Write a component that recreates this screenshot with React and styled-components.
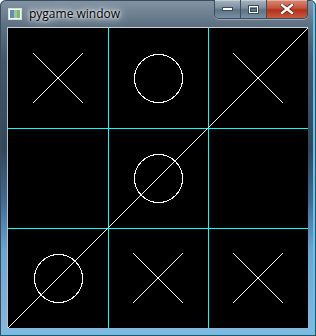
import React from "react"
import styled, { createGlobalStyle } from "styled-components"

const GlobalStyle = createGlobalStyle`
  html, body {
    margin: 0;
    padding: 0;
    background: #ffffff;
  }
`

const Window = styled.div`
  width: 316px;
  height: 336px;
  box-sizing: border-box;
  padding: 0 8px 8px 8px;
  display: flex;
  flex-direction: column;
  border-radius: 6px 6px 0 0;
  background: linear-gradient(
    to bottom,
    #8394a3 0px,
    #5f7284 24px,
    #435669 60px,
    #33475b 150px,
    #3f6a92 200px,
    #6ea4d2 250px,
    #86b9df 336px
  );
  box-shadow: inset 0 0 0 1px #3a4d60, inset -1px -1px 0 2px #5cc6ee;
  font-family: "Open Sans", "Liberation Sans", sans-serif;
`

const TitleBar = styled.div`
  height: 27px;
  display: flex;
  align-items: flex-start;
`

const AppIcon = styled.div`
  width: 14px;
  height: 12px;
  margin-top: 8px;
  display: flex;
`

const Title = styled.div`
  margin-left: 7px;
  margin-top: 6px;
  font-size: 12px;
  line-height: 15px;
  color: #000000;
  text-shadow: 0 0 6px #ffffff, 0 0 12px #e8eef3, 0 0 3px #ffffff;
`

const Buttons = styled.div`
  margin-left: auto;
  display: flex;
  height: 18px;
  border: 1px solid #3c4c5c;
  border-top: none;
  border-radius: 0 0 5px 5px;
  overflow: hidden;
  box-shadow: 0 1px 0 rgba(255, 255, 255, 0.35);
`

const CapButton = styled.div`
  width: ${(p) => p.$w}px;
  height: 100%;
  display: flex;
  align-items: center;
  justify-content: center;
  box-sizing: border-box;
  border-left: ${(p) => (p.$first ? "none" : "1px solid #3f4f5e")};
  background: ${(p) =>
    p.$close
      ? "linear-gradient(to bottom, #d88a78 0%, #c4543c 45%, #b2301a 55%, #c85a3e 100%)"
      : "linear-gradient(to bottom, #a8b4c0 0%, #7b8ea0 45%, #5d7285 55%, #7890a4 100%)"};
  box-shadow: inset 0 1px 0 rgba(255, 255, 255, 0.35);
`

const Body = styled.div`
  flex: 1;
  border-top: 1px solid #c8d0d8;
  border-left: 1px solid #b8c2cc;
  margin-left: -1px;
  display: flex;
`

const Canvas = styled.svg`
  display: block;
  background: #000000;
`

const board = [
  ["x", "o", "x"],
  ["", "o", ""],
  ["o", "x", "x"],
]

const Mark = ({ kind, row, col }) => {
  const x = col * 100
  const y = row * 100
  if (kind === "x") {
    return (
      <g stroke="#ffffff" strokeWidth="1" shapeRendering="crispEdges">
        <line x1={x + 25} y1={y + 25} x2={x + 75} y2={y + 75} />
        <line x1={x + 75} y1={y + 25} x2={x + 25} y2={y + 75} />
      </g>
    )
  }
  if (kind === "o") {
    return (
      <circle
        cx={x + 50.5}
        cy={y + 50.5}
        r="24"
        stroke="#ffffff"
        strokeWidth="1"
        fill="none"
        shapeRendering="crispEdges"
      />
    )
  }
  return null
}

const App = () => {
  return (
    <>
      <GlobalStyle />
      <Window>
        <TitleBar>
          <AppIcon>
            <svg width="14" height="12" viewBox="0 0 14 12">
              <rect x="0.5" y="0.5" width="13" height="11" fill="#f4f6f4" stroke="#d8dcd8" />
              <rect x="2" y="2" width="4" height="8" fill="#5f8fb8" />
              <rect x="6" y="2" width="3" height="8" fill="#9fc4a0" />
              <rect x="9" y="2" width="3" height="8" fill="#7cb86a" />
            </svg>
          </AppIcon>
          <Title>pygame window</Title>
          <Buttons>
            <CapButton $w={25} $first>
              <svg width="11" height="4" viewBox="0 0 11 4">
                <rect x="0.5" y="0.5" width="10" height="3" fill="#ffffff" stroke="#3d4b58" />
              </svg>
            </CapButton>
            <CapButton $w={26}>
              <svg width="11" height="9" viewBox="0 0 11 9">
                <rect x="0.5" y="0.5" width="10" height="8" fill="none" stroke="#3d4b58" />
                <rect x="1.5" y="1.5" width="8" height="6" fill="none" stroke="#ffffff" />
                <rect x="2.5" y="3.5" width="6" height="3" fill="none" stroke="#3d4b58" />
              </svg>
            </CapButton>
            <CapButton $w={41} $close>
              <svg width="14" height="10" viewBox="0 0 14 10">
                <path d="M2 1 L12 9 M12 1 L2 9" stroke="#6a2010" strokeWidth="4" strokeLinecap="square" />
                <path d="M2 1 L12 9 M12 1 L2 9" stroke="#ffffff" strokeWidth="2.4" strokeLinecap="square" />
              </svg>
            </CapButton>
          </Buttons>
        </TitleBar>
        <Body>
          <Canvas width="300" height="300" viewBox="0 0 300 300">
            <g stroke="#00ffff" strokeWidth="1" shapeRendering="crispEdges">
              <line x1="100.5" y1="0" x2="100.5" y2="300" />
              <line x1="200.5" y1="0" x2="200.5" y2="300" />
              <line x1="0" y1="100.5" x2="300" y2="100.5" />
              <line x1="0" y1="200.5" x2="300" y2="200.5" />
            </g>
            {board.map((row, r) =>
              row.map((kind, c) => <Mark key={`${r}-${c}`} kind={kind} row={r} col={c} />)
            )}
            <line
              x1="0"
              y1="300"
              x2="300"
              y2="0"
              stroke="#ffffff"
              strokeWidth="1"
              shapeRendering="crispEdges"
            />
          </Canvas>
        </Body>
      </Window>
    </>
  )
}

export default App
